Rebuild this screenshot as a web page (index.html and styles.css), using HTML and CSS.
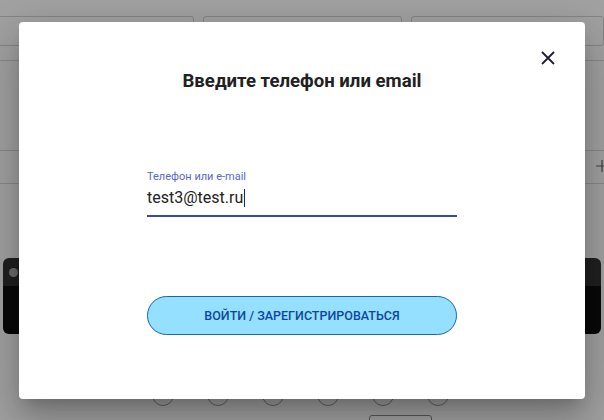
FILE: index.html
```html
<!DOCTYPE html>
<html lang="ru">
<head>
<meta charset="utf-8">
<link rel="stylesheet" href="styles.css">
</head>
<body>
<div class="page">
  <div class="tabs">
    <div class="tab"></div>
    <div class="tab"><span class="tab-text">СН</span></div>
    <div class="tab"></div>
  </div>
  <div class="line l1"></div>
  <div class="line l2"></div>
  <svg class="plus" width="12" height="12" viewBox="0 0 12 12"><path d="M6 0V12M0 6H12" stroke="#666" stroke-width="1.2"/></svg>
  <div class="line l3"></div>
  <div class="dark-row">
    <div class="dark-card left"><span class="dot"></span></div>
    <div class="dark-card right"></div>
  </div>
  <div class="circles">
    <span></span><span></span><span></span><span></span><span></span><span></span>
  </div>
  <div class="small-box"></div>
</div>
<div class="overlay">
  <div class="modal">
    <button class="close" aria-label="Закрыть">
      <svg width="14" height="14" viewBox="0 0 14 14"><path d="M1 1L13 13M13 1L1 13" stroke="#1f1d33" stroke-width="1.8" fill="none"/></svg>
    </button>
    <h2 class="title">Введите телефон или email</h2>
    <div class="field">
      <label class="label">Телефон или e-mail</label>
      <div class="input"><span>test3@test.ru</span><span class="caret"></span></div>
    </div>
    <button class="submit">ВОЙТИ / ЗАРЕГИСТРИРОВАТЬСЯ</button>
  </div>
</div>
</body>
</html>
```
FILE: styles.css
```css
* { box-sizing: border-box; }
html, body { margin: 0; padding: 0; }
body {
  width: 604px;
  height: 420px;
  overflow: hidden;
  position: relative;
  font-family: Roboto, "Liberation Sans", sans-serif;
  background: #fdfdfd;
}
.page { height: 420px; position: relative; }
.tabs {
  display: flex;
  gap: 9px;
  padding-top: 16px;
  margin-left: -2px;
}
.tab {
  flex: 1;
  height: 30px;
  border: 1px solid #d0d0d0;
  border-radius: 3px;
  position: relative;
}
.tab:first-child { flex: 0 0 196px; }
.tab:nth-child(2) { flex: 0 0 199px; }
.tab-text {
  position: absolute;
  left: 47px;
  top: 2px;
  font-size: 13px;
  color: #1e4fa0;
}
.line { height: 1px; background: #d6d6d6; }
.l1 { margin-top: 14px; }
.l2 { margin-top: 89px; }
.plus {
  position: absolute;
  left: 596px;
  top: 160px;
}
.l3 { margin-top: 32px; }
.dark-row {
  display: flex;
  justify-content: space-between;
  margin-top: 74px;
  padding: 0 3px;
}
.dark-card {
  width: 40px;
  height: 76px;
  border-radius: 6px;
  background: linear-gradient(#333 0 28px, #0f0f0f 28px);
  position: relative;
}
.dot {
  position: absolute;
  left: 6px;
  top: 10px;
  width: 9px;
  height: 9px;
  border-radius: 50%;
  background: #aaa;
}
.circles {
  display: flex;
  gap: 33px;
  padding-left: 152px;
  margin-top: 50px;
}
.circles span {
  width: 22px;
  height: 22px;
  border-radius: 50%;
  border: 1px solid #999;
}
.small-box {
  position: absolute;
  left: 369px;
  top: 415px;
  width: 63px;
  height: 20px;
  border: 1px solid #888;
  border-radius: 3px;
}
.overlay {
  position: absolute;
  inset: 0;
  background: rgba(0, 0, 0, 0.36);
  display: flex;
  align-items: center;
  justify-content: center;
}
.modal {
  width: 566px;
  height: 377px;
  background: #fff;
  border-radius: 4px;
  box-shadow: 0 11px 15px -7px rgba(0,0,0,.2), 0 24px 38px 3px rgba(0,0,0,.14), 0 9px 46px 8px rgba(0,0,0,.12);
  position: relative;
  display: flex;
  flex-direction: column;
  align-items: center;
  padding-top: 47px;
}
.close {
  position: absolute;
  right: 29px;
  top: 28px;
  width: 16px;
  height: 16px;
  padding: 0;
  border: 0;
  background: none;
  display: flex;
  align-items: center;
  justify-content: center;
}
.title {
  margin: 0;
  font-size: 18.6px;
  font-weight: 700;
  color: #212121;
  line-height: 24px;
}
.field {
  width: 310px;
  margin-top: 77px;
}
.label {
  display: block;
  font-size: 11px;
  color: #5a67c8;
  line-height: 13px;
}
.input {
  display: flex;
  align-items: center;
  height: 34px;
  border-bottom: 2px solid #3949ab;
  font-size: 16px;
  color: #212121;
  padding-bottom: 2px;
}
.caret {
  display: inline-block;
  width: 1px;
  height: 18px;
  background: #1a237e;
  margin-left: 1px;
}
.submit {
  margin-top: 79px;
  width: 310px;
  height: 39px;
  border-radius: 20px;
  border: 1px solid #1565c0;
  background: #96e0ff;
  color: #0d47a1;
  font-family: Roboto, "Liberation Sans", sans-serif;
  font-size: 12.5px;
  font-weight: 500;
  padding: 0;
}
```
